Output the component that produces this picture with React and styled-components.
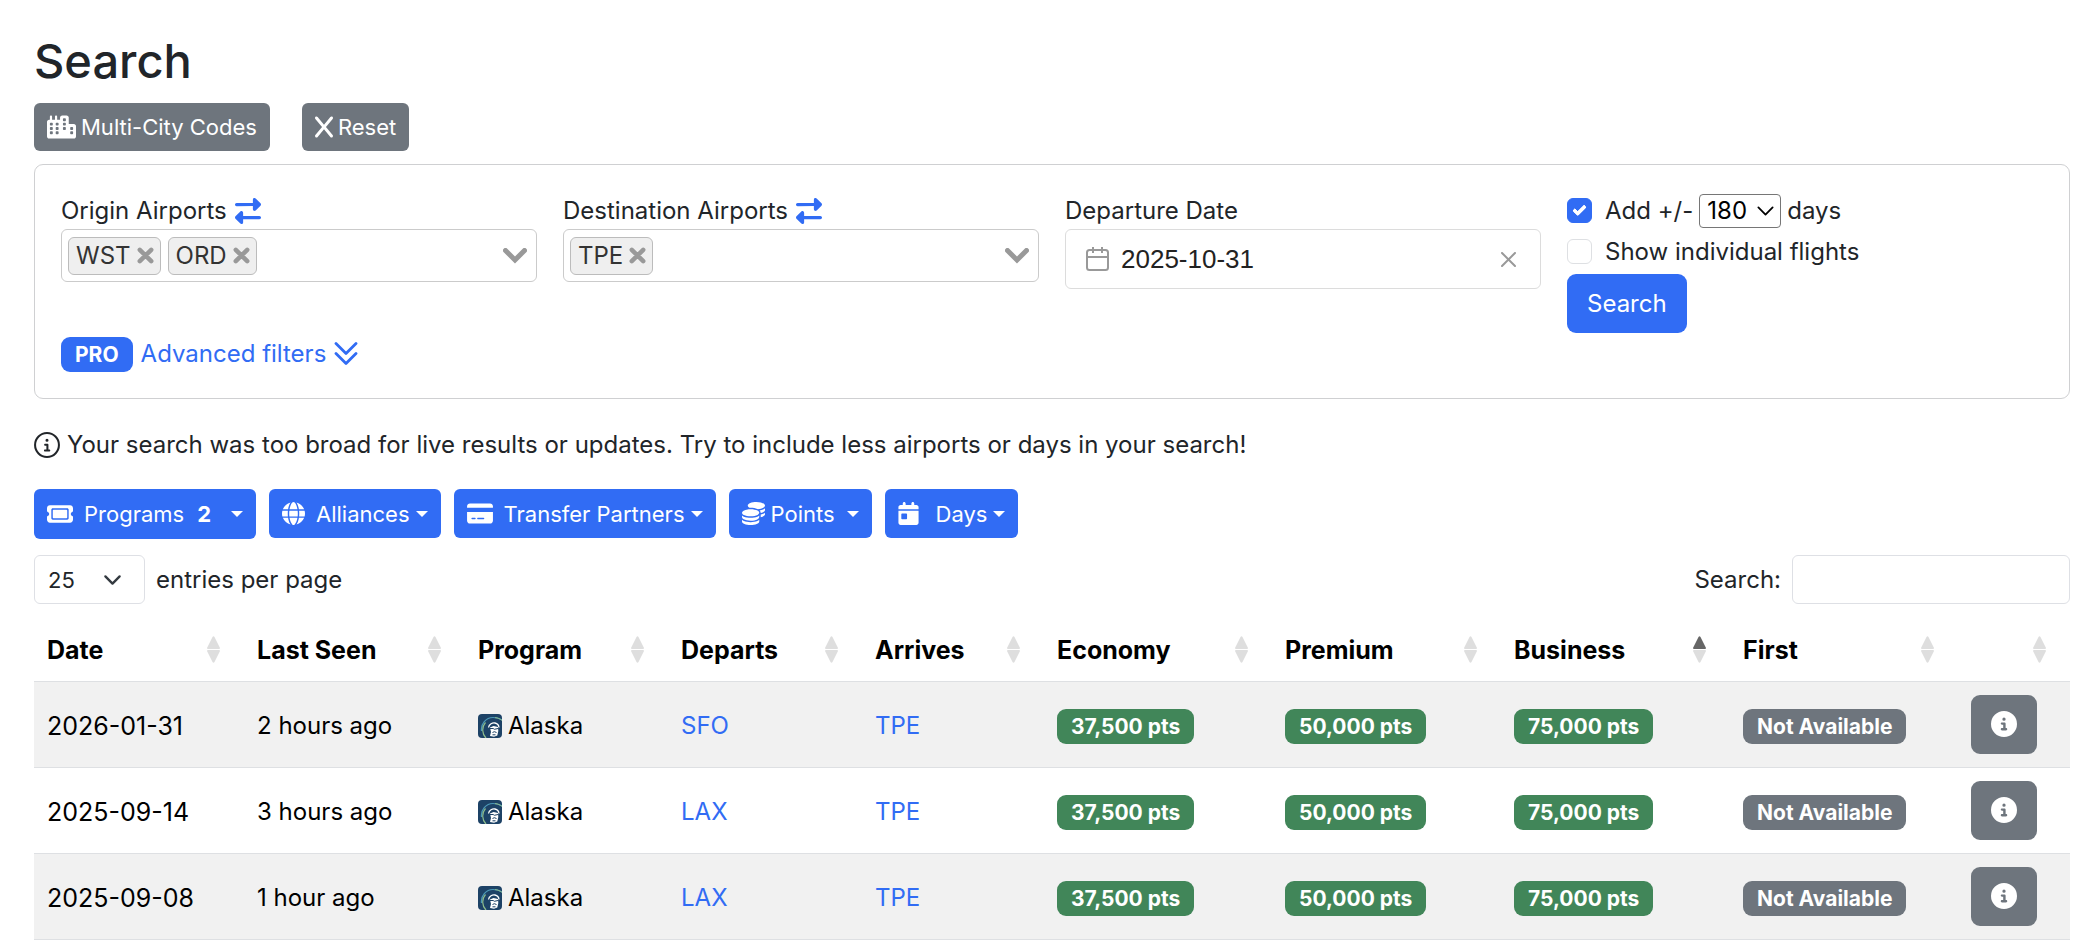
import React from "react";
import styled, { createGlobalStyle, css } from "styled-components";
import {
  FaCity,
  FaX,
  FaRightLeft,
  FaTicket,
  FaGlobe,
  FaCreditCard,
  FaCoins,
  FaCalendarDay,
  FaCircleInfo,
} from "react-icons/fa6";

const GlobalStyle = createGlobalStyle`
  *, *::before, *::after { box-sizing: border-box; }
  body {
    margin: 0;
    background: #fff;
    color: #212529;
    font-family: Inter, "Liberation Sans", sans-serif;
    font-size: 24px;
    line-height: 36px;
  }
  button, input, select { font: inherit; color: inherit; margin: 0; }
  a { color: #316cf4; text-decoration: none; }
`;

const blue = "#316cf4";
const gray = "#6e757d";
const green = "#418659";

const Page = styled.main`
  padding: 31px 12px 0 34px;
`;

const Title = styled.h1`
  margin: 0;
  font-size: 47px;
  line-height: 60px;
  font-weight: 500;
`;

const ButtonRow = styled.div`
  display: flex;
  align-items: flex-start;
  gap: ${(p) => p.$gap}px;
  margin-top: ${(p) => p.$top}px;
`;

const SmallButton = styled.button`
  display: flex;
  align-items: center;
  height: ${(p) => p.$height ?? 48}px;
  padding: 0 13px;
  gap: ${(p) => p.$gap ?? 5}px;
  border: 0;
  border-radius: 6px;
  background: ${(p) => (p.$primary ? blue : gray)};
  color: #fff;
  font-size: 22px;
  white-space: nowrap;
`;

const Glyph = styled.span`
  display: flex;
  flex: none;
  width: ${(p) => p.$w}px;
  svg { width: 100%; }
`;

const Count = styled.strong`
  margin-left: 2px;
  font-weight: 700;
`;

const Caret = styled.span`
  border: 6px solid transparent;
  border-top-color: currentColor;
  border-bottom: 0;
`;

const TextWithCaret = styled.span`
  display: flex;
  align-items: center;
  gap: ${(p) => p.$gap}px;
`;

const Card = styled.form`
  margin-top: 13px;
  padding: 27px 26px 26px;
  border: 1px solid #cfd0d2;
  border-radius: 9px;
`;

const FieldGrid = styled.div`
  display: grid;
  grid-template-columns: repeat(4, minmax(0, 1fr));
  gap: 26px;
  align-items: start;
`;

const Field = styled.div`
  display: flex;
  flex-direction: column;
`;

const FieldLabel = styled.label`
  display: flex;
  align-items: center;
  gap: 8px;
  height: 37px;
`;

const boxed = css`
  display: flex;
  align-items: center;
  border-radius: 6px;
`;

const TagBox = styled.div`
  ${boxed}
  height: 53px;
  padding: 0 9px 0 6px;
  gap: 7px;
  border: 1px solid #cbcbcb;
`;

const Tag = styled.span`
  ${boxed}
  height: 38px;
  padding: 0 6px 0 7px;
  gap: 6px;
  border: 1px solid #bcbcbc;
  background: #efefef;
  color: #333;
`;

const BareButton = styled.button`
  display: flex;
  padding: 0;
  border: 0;
  background: none;
`;

const TagInput = styled.input`
  flex: 1;
  min-width: 0;
  border: 0;
  outline: 0;
  background: none;
`;

const DateBox = styled.div`
  ${boxed}
  height: 60px;
  padding: 0 24px 0 20px;
  gap: 12px;
  border: 1px solid #dcdcdc;
`;

const DateInput = styled.input`
  flex: 1;
  min-width: 0;
  padding: 0;
  border: 0;
  outline: 0;
  color: #222;
  font-family: "Liberation Sans", Arial, sans-serif;
  font-size: 26px;
`;

const CheckLine = styled.div`
  display: flex;
  align-items: center;
  gap: 13px;
  height: ${(p) => p.$height}px;
`;

const CheckText = styled.label`
  white-space: nowrap;
`;

const Checkbox = styled.input`
  appearance: none;
  width: 25px;
  height: 25px;
  border: 1px solid #dee0e3;
  border-radius: 6px;
  display: grid;
  place-items: center;
  &:checked { background: ${blue}; border-color: ${blue}; }
  &:checked::after {
    content: "";
    width: 13px;
    height: 8px;
    border: solid #fff;
    border-width: 0 0 4px 4px;
    border-radius: 2px;
    transform: translateY(-2px) rotate(-45deg);
  }
`;

const Inline = styled.div`
  display: flex;
  align-items: center;
  gap: 6px;
`;

const SelectWrap = styled.div`
  display: grid;
  align-items: center;
  > * { grid-area: 1 / 1; }
  > svg { justify-self: end; pointer-events: none; margin-right: ${(p) => p.$inset}px; }
`;

const DaysSelect = styled.select`
  appearance: none;
  width: 82px;
  height: 34px;
  padding: 0 0 0 7px;
  border: 1px solid #767676;
  border-radius: 4px;
  background: #fff;
  color: #000;
  line-height: 30px;
`;

const SearchButton = styled.button`
  align-self: flex-start;
  height: 59px;
  padding: 0 20px;
  border: 0;
  border-radius: 9px;
  background: ${blue};
  color: #fff;
`;

const Advanced = styled.a`
  display: inline-flex;
  align-items: center;
  gap: 8px;
`;

const Badge = styled.span`
  display: inline-block;
  height: 35px;
  padding: 0 14px;
  border-radius: 9px;
  background: ${(p) => p.$bg};
  color: #fff;
  font-size: 21px;
  line-height: 36px;
  font-weight: 700;
  white-space: nowrap;
  vertical-align: middle;
`;

const AdvancedRow = styled.div`
  display: flex;
  align-items: center;
  margin-top: 3px;
`;

const Notice = styled.p`
  display: flex;
  align-items: center;
  gap: 7px;
  margin: 28px 0 26px;
`;

const TableTools = styled.div`
  display: flex;
  justify-content: space-between;
  margin-top: 16px;
`;

const ToolLabel = styled.label`
  display: flex;
  align-items: center;
  gap: 11px;
`;

const LengthSelect = styled.select`
  appearance: none;
  width: 111px;
  height: 49px;
  padding: 0 0 0 13px;
  border: 1px solid #dee0e5;
  border-radius: 6px;
  background: #fff;
  font-size: 22px;
`;

const FilterInput = styled.input`
  width: 278px;
  height: 49px;
  padding: 0 13px;
  border: 1px solid #dee0e5;
  border-radius: 6px;
`;

const Table = styled.table`
  width: 100%;
  margin-top: 15px;
  table-layout: fixed;
  border-collapse: collapse;
  color: #000;
`;

const Th = styled.th`
  height: 62px;
  padding: 0 24px 0 13px;
  border-bottom: 1px solid #dee0e3;
  text-align: left;
  font-size: 25px;
  font-weight: 700;
`;

const ThInner = styled.div`
  display: flex;
  align-items: center;
  justify-content: space-between;
`;

const Row = styled.tr`
  height: 86px;
  border-bottom: 1px solid #dee0e3;
  &:nth-child(odd) { background: #f1f1f1; }
`;

const Td = styled.td`
  padding: 3px 12px 0 13px;
  vertical-align: middle;
  white-space: nowrap;
`;

const DateTd = styled(Td)`
  font-size: 25px;
`;

const ActionTd = styled(Td)`
  padding-top: 0;
`;

const Program = styled.span`
  display: flex;
  align-items: center;
  gap: 6px;
`;

const InfoButton = styled.button`
  display: flex;
  align-items: center;
  justify-content: center;
  width: 66px;
  height: 59px;
  border: 0;
  border-radius: 9px;
  background: ${gray};
  color: #fff;
`;

const Chevron = ({ stroke, color }) => (
  <svg width="19" height="12" viewBox="0 0 16 10" fill="none" stroke={color} strokeWidth={stroke} strokeLinecap="round" strokeLinejoin="round" aria-hidden="true">
    <path d="M2 2l6 6 6-6" />
  </svg>
);

const BoldChevron = () => (
  <svg width="24" height="16" viewBox="0 0 24 16" fill="none" stroke="#999" strokeWidth="5" aria-hidden="true">
    <path d="M2.500 2.500L12 12L21.500 2.500" strokeLinecap="round" />
  </svg>
);

const DoubleChevron = () => (
  <svg width="24" height="24" viewBox="0 0 24 24" fill="none" stroke="currentColor" strokeWidth="2.800" strokeLinecap="round" strokeLinejoin="round" aria-hidden="true">
    <path d="M2 1.500l10 10 10-10M2 11.500l10 10 10-10" />
  </svg>
);

const TagCross = () => (
  <svg width="17" height="17" viewBox="0 0 17 17" stroke="#999" strokeWidth="4.500" strokeLinecap="round" aria-hidden="true">
    <path d="M2.800 2.800l11.400 11.400M14.200 2.800L2.800 14.200" />
  </svg>
);

const CalendarIcon = () => (
  <svg width="23" height="24" viewBox="0 0 23 24" fill="none" stroke="#999" strokeWidth="2" aria-hidden="true">
    <rect x="1" y="3" width="21" height="20" rx="2.500" />
    <path d="M1 10h21M7 0v6M16 0v6" />
  </svg>
);

const ClearIcon = () => (
  <svg width="15" height="15" viewBox="0 0 15 15" stroke="#999" strokeWidth="2" strokeLinecap="round" aria-hidden="true">
    <path d="M1 1l13 13M14 1L1 14" />
  </svg>
);

const InfoOutline = () => (
  <svg width="26" height="26" viewBox="0 0 512 512" fill="currentColor" aria-hidden="true">
    <circle cx="256" cy="256" r="235" fill="none" stroke="currentColor" strokeWidth="40" />
    <path d="M216 344h28v-72h-24c-11 0-20-9-20-20s9-20 20-20h44c11 0 20 9 20 20v92h16c11 0 20 9 20 20s-9 20-20 20h-84c-11 0-20-9-20-20s9-20 20-20zM256 132a30 30 0 1 1 0 60 30 30 0 1 1 0-60z" />
  </svg>
);

const SortIcon = ({ ascending }) => (
  <svg width="13" height="27" viewBox="0 0 13 27" aria-hidden="true">
    <path d="M5.500 1Q6.500 -0.500 7.500 1L13 12Q13 13 12 13H1Q0 13 0 12Z" fill={ascending ? "#666" : "#dedede"} />
    <path d="M5.500 26Q6.500 27.500 7.500 26L13 15Q13 14 12 14H1Q0 14 0 15Z" fill="#dedede" />
  </svg>
);

const AlaskaLogo = () => (
  <svg width="24" height="24" viewBox="0 0 24 24" aria-hidden="true">
    <rect width="24" height="24" rx="4" fill="#1d4266" />
    <path d="M3.500 17C2.500 10 8 3.500 15 3.500c3 0 6 .8 9 2.500" fill="none" stroke="#4d9ab8" strokeWidth="1.200" />
    <path d="M8 24C4 20 3.500 13 7.500 8.500" fill="none" stroke="#8dbb8c" strokeWidth="1.200" />
    <path d="M17 3.600c3 .3 5 1.200 7 2.800" fill="none" stroke="#8dbb8c" strokeWidth="1" />
    <path d="M10.500 13.500C11 10 14.500 8.500 17 9c2.500.5 3.800 2 4 4.500" fill="none" stroke="#fff" strokeWidth="1.300" />
    <path d="M12 13.500l3.500-1.500 4.500 1 .3 4-1 4.500-3.300 1.300-4-.8 1-4z" fill="#fff" />
    <path d="M12 14.500h3.200l1.200.8 3.600-.8M14.500 18.500l1.800-.8 2.200.8M14.500 20.800h3" stroke="#1d4266" strokeWidth="1" fill="none" />
  </svg>
);

function AirportField({ id, label, codes }) {
  return (
    <Field>
      <FieldLabel htmlFor={id}>
        {label}
        <FaRightLeft size={26} color={blue} />
      </FieldLabel>
      <TagBox>
        {codes.map((code) => (
          <Tag key={code}>
            {code}
            <BareButton type="button" aria-label={`Remove ${code}`}>
              <TagCross />
            </BareButton>
          </Tag>
        ))}
        <TagInput id={id} />
        <BoldChevron />
      </TagBox>
    </Field>
  );
}

function FilterButton({ icon: Icon, iconWidth, iconGap = 11, caretGap = 6, label }) {
  return (
    <SmallButton type="button" $primary $height={49} $gap={iconGap}>
      <Glyph $w={iconWidth}><Icon size={23} /></Glyph>
      <TextWithCaret $gap={caretGap}>
        {label}
        <Caret />
      </TextWithCaret>
    </SmallButton>
  );
}

const columns = [
  ["Date", 210],
  ["Last Seen", 221],
  ["Program", 203],
  ["Departs", 194],
  ["Arrives", 182],
  ["Economy", 228],
  ["Premium", 229],
  ["Business", 229],
  ["First", 228],
  ["", 112],
];
const totalWidth = columns.reduce((sum, [, w]) => sum + w, 0);

const Col = styled.col`
  width: ${(p) => (p.$share * 100) / totalWidth}%;
`;

const flights = [
  { date: "2026-01-31", seen: "2 hours ago", from: "SFO" },
  { date: "2025-09-14", seen: "3 hours ago", from: "LAX" },
  { date: "2025-09-08", seen: "1 hour ago", from: "LAX" },
];

export default function App() {
  return (
    <Page>
      <GlobalStyle />
      <Title>Search</Title>
      <ButtonRow $gap={32} $top={12}>
        <SmallButton type="button">
          <Glyph $w={29}><FaCity size={24} /></Glyph> Multi-City Codes
        </SmallButton>
        <SmallButton type="button">
          <Glyph $w={18}><FaX size={24} /></Glyph> Reset
        </SmallButton>
      </ButtonRow>

      <Card onSubmit={(e) => e.preventDefault()}>
        <FieldGrid>
          <AirportField id="origin" label="Origin Airports" codes={["WST", "ORD"]} />
          <AirportField id="destination" label="Destination Airports" codes={["TPE"]} />
          <Field>
            <FieldLabel htmlFor="departure">Departure Date</FieldLabel>
            <DateBox>
              <CalendarIcon />
              <DateInput id="departure" defaultValue="2025-10-31" />
              <BareButton type="button" aria-label="Clear date">
                <ClearIcon />
              </BareButton>
            </DateBox>
          </Field>
          <Field>
            <CheckLine $height={37}>
              <Checkbox id="range" type="checkbox" defaultChecked />
              <Inline>
                <CheckText htmlFor="range">Add +/-</CheckText>
                <SelectWrap $inset={6}>
                  <DaysSelect aria-label="Number of days" defaultValue="180">
                    <option>180</option>
                  </DaysSelect>
                  <Chevron stroke={1.5} color="#000" />
                </SelectWrap>
                <CheckText htmlFor="range">days</CheckText>
              </Inline>
            </CheckLine>
            <CheckLine $height={45}>
              <Checkbox id="individual" type="checkbox" />
              <CheckText htmlFor="individual">Show individual flights</CheckText>
            </CheckLine>
            <SearchButton type="submit">Search</SearchButton>
          </Field>
        </FieldGrid>
        <AdvancedRow>
          <Advanced href="#advanced">
            <Badge $bg={blue}>PRO</Badge>
            Advanced filters
            <DoubleChevron />
          </Advanced>
        </AdvancedRow>
      </Card>

      <Notice>
        <InfoOutline />
        Your search was too broad for live results or updates. Try to include less airports or days in your search!
      </Notice>

      <ButtonRow $gap={13} $top={0}>
        <SmallButton type="button" $primary $height={50} $gap={11}>
          <Glyph $w={26}><FaTicket size={24} /></Glyph>
          Programs
          <TextWithCaret $gap={20}>
            <Count>2</Count>
            <Caret />
          </TextWithCaret>
        </SmallButton>
        <FilterButton icon={FaGlobe} iconWidth={23} label="Alliances" />
        <FilterButton icon={FaCreditCard} iconWidth={26} label="Transfer Partners" />
        <FilterButton icon={FaCoins} iconWidth={23} iconGap={6} caretGap={12} label="Points" />
        <FilterButton icon={FaCalendarDay} iconWidth={21} iconGap={17} label="Days" />
      </ButtonRow>

      <TableTools>
        <ToolLabel>
          <SelectWrap $inset={23}>
            <LengthSelect defaultValue="25">
              <option>25</option>
            </LengthSelect>
            <Chevron stroke={2} color="#343a40" />
          </SelectWrap>
          entries per page
        </ToolLabel>
        <ToolLabel>
          Search:
          <FilterInput type="search" />
        </ToolLabel>
      </TableTools>

      <Table>
        <colgroup>
          {columns.map(([name, w]) => (
            <Col key={name} $share={w} />
          ))}
        </colgroup>
        <thead>
          <tr>
            {columns.map(([name]) => (
              <Th key={name}>
                <ThInner>
                  <span>{name}</span>
                  <SortIcon ascending={name === "Business"} />
                </ThInner>
              </Th>
            ))}
          </tr>
        </thead>
        <tbody>
          {flights.map((f) => (
            <Row key={f.date}>
              <DateTd>{f.date}</DateTd>
              <Td>{f.seen}</Td>
              <Td>
                <Program>
                  <AlaskaLogo /> Alaska
                </Program>
              </Td>
              <Td><a href="#departs">{f.from}</a></Td>
              <Td><a href="#arrives">TPE</a></Td>
              <Td><Badge $bg={green}>37,500 pts</Badge></Td>
              <Td><Badge $bg={green}>50,000 pts</Badge></Td>
              <Td><Badge $bg={green}>75,000 pts</Badge></Td>
              <Td><Badge $bg={gray}>Not Available</Badge></Td>
              <ActionTd>
                <InfoButton type="button" aria-label="Flight details">
                  <FaCircleInfo size={26} />
                </InfoButton>
              </ActionTd>
            </Row>
          ))}
        </tbody>
      </Table>
    </Page>
  );
}
